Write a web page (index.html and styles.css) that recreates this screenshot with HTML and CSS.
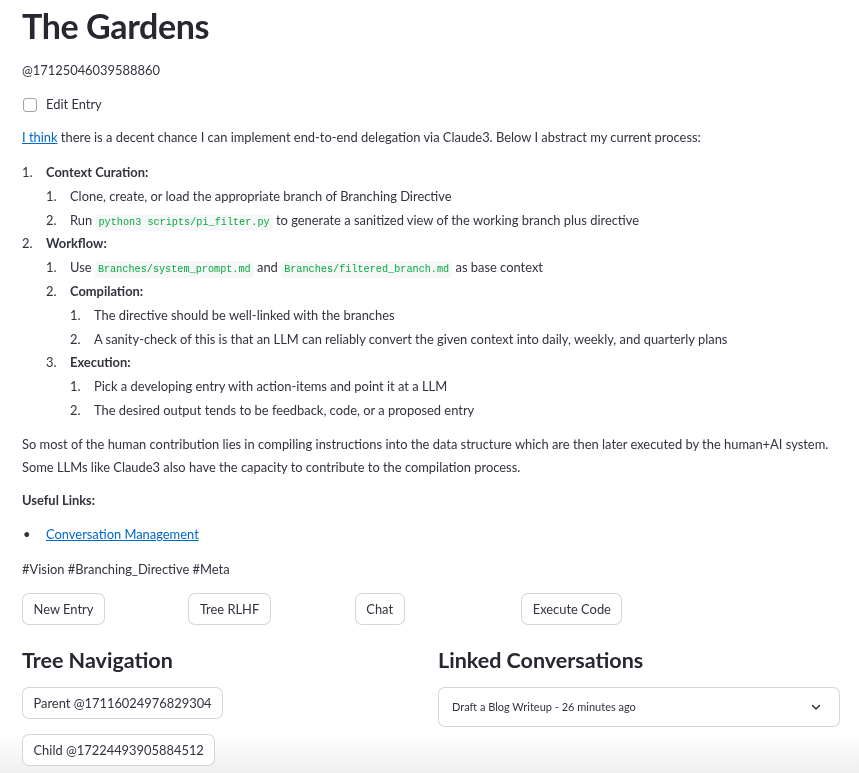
FILE: index.html
```html
<!DOCTYPE html>
<html lang="en">
<head>
<meta charset="utf-8">
<title>The Gardens</title>
<link rel="stylesheet" href="styles.css">
</head>
<body>
<main class="page">
  <h1 class="title">The Gardens</h1>
  <div class="entry-id">@17125046039588860</div>
  <label class="checkbox-row"><span class="box"></span><span>Edit Entry</span></label>
  <p class="para first"><a href="#">I think</a> there is a decent chance I can implement end-to-end delegation via Claude3. Below I abstract my current process:</p>
  <ol class="list top">
    <li><div class="body"><strong>Context Curation:</strong>
      <ol class="list">
        <li><div class="body">Clone, create, or load the appropriate branch of Branching Directive</div></li>
        <li><div class="body">Run <code>python3 scripts/pi_filter.py</code> to generate a sanitized view of the working branch plus directive</div></li>
      </ol></div>
    </li>
    <li><div class="body"><strong>Workflow:</strong>
      <ol class="list">
        <li><div class="body">Use <code>Branches/system_prompt.md</code> and <code>Branches/filtered_branch.md</code> as base context</div></li>
        <li><div class="body"><strong>Compilation:</strong>
          <ol class="list">
            <li><div class="body">The directive should be well-linked with the branches</div></li>
            <li><div class="body">A sanity-check of this is that an LLM can reliably convert the given context into daily, weekly, and quarterly plans</div></li>
          </ol></div>
        </li>
        <li><div class="body"><strong>Execution:</strong>
          <ol class="list">
            <li><div class="body">Pick a developing entry with action-items and point it at a LLM</div></li>
            <li><div class="body">The desired output tends to be feedback, code, or a proposed entry</div></li>
          </ol></div>
        </li>
      </ol></div>
    </li>
  </ol>
  <p class="para summary">So most of the human contribution lies in compiling instructions into the data structure which are then later executed by the human+AI system. Some LLMs like Claude3 also have the capacity to contribute to the compilation process.</p>
  <p class="para links-head"><strong>Useful Links:</strong></p>
  <ul class="bullets">
    <li><a href="#">Conversation Management</a></li>
  </ul>
  <p class="para tags">#Vision #Branching_Directive #Meta</p>
  <div class="button-row">
    <div class="col"><button class="btn">New Entry</button></div>
    <div class="col"><button class="btn">Tree RLHF</button></div>
    <div class="col"><button class="btn">Chat</button></div>
    <div class="col"><button class="btn">Execute Code</button></div>
    <div class="col"></div>
  </div>
  <div class="two-col">
    <section class="col-half">
      <h3 class="sub">Tree Navigation</h3>
      <button class="btn nav-btn">Parent @17116024976829304</button>
      <button class="btn nav-btn child">Child @17224493905884512</button>
    </section>
    <section class="col-half">
      <h3 class="sub">Linked Conversations</h3>
      <div class="select">
        <span>Draft a Blog Writeup - 26 minutes ago</span>
        <svg class="chev" width="12" height="12" viewBox="0 0 12 12"><path d="M2.5 4.5 L6 8 L9.5 4.5" fill="none" stroke="#31333f" stroke-width="1.5" stroke-linecap="round" stroke-linejoin="round"/></svg>
      </div>
    </section>
  </div>
</main>
<div class="bottom-fade"></div>
</body>
</html>
```

FILE: styles.css
```css
* { box-sizing: border-box; }
html { background: #ffffff; }
html, body { margin: 0; padding: 0; }
body {
  font-family: Lato, "Noto Sans", sans-serif;
  font-size: 12.9px;
  color: #31333f;
  line-height: 23px;
}
.page {
  width: 818px;
  margin-left: 22px;
  display: flex;
  flex-direction: column;
}
.title {
  margin: 3px 0 0 0;
  font-size: 34px;
  line-height: 46px;
  font-weight: 700;
  color: #262730;
  letter-spacing: -0.4px;
}
.entry-id { margin-top: 10px; }
.checkbox-row {
  margin-top: 11px;
  display: flex;
  align-items: center;
  gap: 9px;
  height: 23px;
}
.box {
  width: 14px;
  height: 14px;
  border: 1px solid rgba(49, 51, 63, 0.45);
  border-radius: 3px;
  margin-left: 1px;
}
.para { margin: 0; }
.para.first { margin-top: 10px; }
a { color: #0068c9; text-decoration: underline; }
code {
  font-family: "Liberation Mono", "DejaVu Sans Mono", monospace;
  font-size: 10.2px;
  line-height: 12px;
  color: #09ab3b;
  background: #f6f7f9;
  padding: 3px 3px;
  border-radius: 4px;
}
.list {
  list-style: none;
  margin: 0;
  padding: 0;
  counter-reset: item;
}
.list.top { margin-top: 12px; }
.list li {
  display: flex;
  counter-increment: item;
}
.list li + li { margin-top: 0.8px; }
.list li::before {
  content: counter(item) ".";
  flex: 0 0 24px;
}
.list .body { flex: 1; }
.list .list { margin-top: 0.8px; }
strong { font-weight: 700; }
.para.summary { margin-top: 11px; }
.para.links-head { margin-top: 10px; }
.bullets {
  list-style: none;
  margin: 11px 0 0 0;
  padding: 0;
}
.bullets li { display: flex; }
.bullets li::before {
  content: "\2022";
  flex: 0 0 24px;
  padding-left: 1px;
  margin-right: -1px;
}
.para.tags { margin-top: 12px; }
.button-row {
  margin-top: 12px;
  display: grid;
  grid-template-columns: repeat(5, 1fr);
  gap: 14px;
}
.btn {
  font-family: inherit;
  font-size: 12.9px;
  color: #31333f;
  background: #ffffff;
  border: 1px solid rgba(49, 51, 63, 0.2);
  border-radius: 7px;
  height: 32px;
  padding: 0 10.5px;
  line-height: 30px;
  cursor: pointer;
}
.two-col {
  display: grid;
  grid-template-columns: 1fr 1fr;
  gap: 14px;
  margin-top: 20px;
}
.col-half {
  display: flex;
  flex-direction: column;
  align-items: flex-start;
}
.sub {
  margin: 0;
  font-size: 21.5px;
  line-height: 30px;
  font-weight: 700;
  color: #262730;
}
.nav-btn { margin-top: 12px; }
.nav-btn.child { margin-top: 15px; }
.select {
  margin-top: 12px;
  width: 100%;
  height: 40px;
  background: #ffffff;
  border: 1px solid rgba(49, 51, 63, 0.2);
  border-radius: 7px;
  display: flex;
  align-items: center;
  justify-content: space-between;
  padding: 0 17px 0 13px;
  font-size: 11px;
}
.bottom-fade {
  position: fixed;
  z-index: -1;
  left: 0;
  right: 0;
  bottom: 0;
  height: 40px;
  background: linear-gradient(to bottom, rgba(255,255,255,0), #efeff0);
  pointer-events: none;
}
```
